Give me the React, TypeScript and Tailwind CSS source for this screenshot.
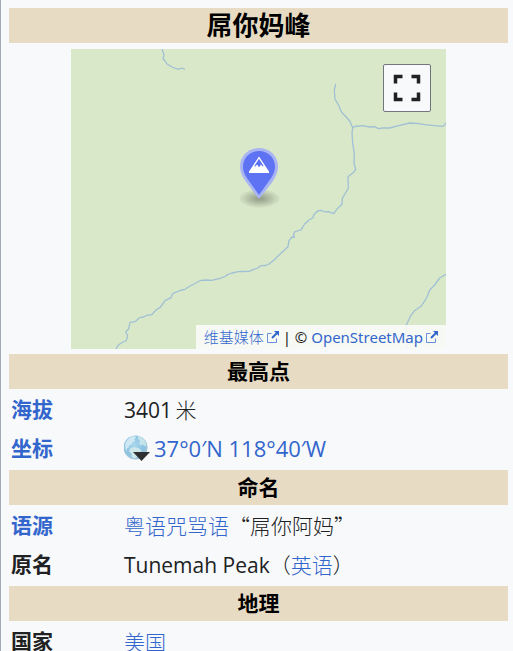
import type { ReactNode } from 'react';

const LINK = 'text-[#3366cc] hover:underline';

/** Small box-and-arrow glyph shown after links that leave the site. */
function ExternalIcon() {
  return (
    <svg viewBox="0 0 12 12" className="inline-block size-3 ml-[3px] align-baseline" aria-hidden="true">
      <path fill="#3366cc" d="M7 0h5v5l-1.800-1.800-4.500 4.500-1.400-1.400 4.500-4.500z" />
      <path fill="none" stroke="#6a8fda" strokeWidth="1" d="M4.500 2.500h-4v9h9v-4" />
    </svg>
  );
}

function MapCanvas() {
  return (
    <svg viewBox="0 0 375 300" className="block w-full h-full" aria-hidden="true">
      <defs>
        <radialGradient id="pin-shadow">
          <stop offset="0" stopColor="#000" stopOpacity="0.34" />
          <stop offset="0.45" stopColor="#000" stopOpacity="0.2" />
          <stop offset="0.85" stopColor="#000" stopOpacity="0.07" />
          <stop offset="1" stopColor="#000" stopOpacity="0.04" />
        </radialGradient>
      </defs>
      <rect width="375" height="300" fill="#d9e8c9" />
      <g fill="none" stroke="#a0c0d4" strokeWidth="1.300" strokeLinejoin="round">
        <path d="M91 0L93 6 92 10 94 12 96 15 101 18 106 20 108 20 111 19 114 20.500" />
        <path d="M264.700 35L263.300 41 264 50 268 57 269 60 271 63.700 274.300 67 278.700 72 281.700 78.700" />
        <path d="M281.700 78.700L284 77.500 291.300 76.700 298.700 78 303 77.700 307.700 79.700 312 79 318.700 79 328.700 76.300 338.700 74 346 74.300 353.700 75.700 363.700 76.700 371 77.300 373.500 76.500 375 73.700" />
        <path d="M281.700 78.700L281 84.300 281.700 94.300 283.300 104.300 283 114.300 284.700 120.300 283 123 277 127.700 277.300 139.300 274.500 144 271.300 149.300 271 155.300 266 160 263 164.300 260.500 164 258 162.700 254.500 163 249.700 161.300 246.500 162 242.700 166 242 168.700 238 171 233.700 175 231.500 178.500 229.700 181 224 182.700 222.500 185 223.300 188.300 221 188 218 191.700 217 197.700 212.500 202 207 207 203 211 198 215 194.500 216.500 189.700 216.700 186 219.500 182 220.700 178.300 222.300 171 222.500 167.300 222.700 161 224 156.300 225.700 154 227.500 149 229.300 140.700 231.300 135 231 129 231.700 124 234.500 119 237 114 240.300 109 241.500 101.700 244.700 100 248.700 94 251.700 92 254.500 89 258.700 85.500 260.500 80.700 265.700 75.700 266.300 73 268 69.500 268.300 67.300 269.700 64.700 272.300 59 273.300 57.700 279.700 54.700 283 56.700 287 55 292 52 293 47.300 296 45 300" />
        <path d="M375 225.300L368.700 229 363.700 236 358.700 241 357 245.500 355.300 249.300 350.300 257 343.700 261.700 339.700 266.700 335.300 276 334.500 283 336 300" />
      </g>
      <ellipse cx="188.500" cy="149.500" rx="20" ry="9" fill="url(#pin-shadow)" />
      <path
        d="M188 99c10.500 0 19 8 19 18.500 0 6-2.500 10.500-6 16L188 150l-12.500-16.500c-4-5.500-6.500-10-6.500-16C169 107 177.500 99 188 99z"
        fill="#a9b5f3"
      />
      <path
        d="M188 102c9 0 16 7 16 15.500 0 5.500-2.500 9.500-6 14.500l-10 14-10-14c-3.500-5-6-9-6-14.500C172 109 179 102 188 102z"
        fill="#5d73f3"
      />
      <path
        fillRule="evenodd"
        d="M188 107.500l10 15v1.500h-20v-1.500zM188 109.800l-4.500 7 .5 1 2-2.300 2 2.800 2-2.800 2 2.300.5-1z"
        fill="#fff"
      />
    </svg>
  );
}

function LocationMap() {
  return (
    <div className="relative mx-auto w-[375px] h-[300px] max-w-full overflow-hidden">
      <MapCanvas />
      <button
        type="button"
        aria-label="全屏"
        className="absolute top-[15px] right-[15px] size-12 flex items-center justify-center rounded-xs border border-[#72777d] bg-[#f8f9fb]"
      >
        <svg viewBox="0 0 28 28" className="size-7" fill="none" stroke="#202122" strokeWidth="3.500" aria-hidden="true">
          <path d="M2.500 9.500V2.500h7M18.500 2.500h7v7M25.500 18.500v7h-7M9.500 25.500h-7v-7" />
        </svg>
      </button>
      <div className="absolute right-0 bottom-0 h-6 px-2 font-['Noto_Sans','Noto_Sans_CJK_SC',sans-serif] text-[15px] leading-6 whitespace-nowrap bg-white/80">
        <a href="#wikimedia" className={LINK}><Zh>维基媒体</Zh><ExternalIcon /></a>
        {' | © '}
        <a href="#osm" className={LINK}>OpenStreetMap<ExternalIcon /></a>
      </div>
    </div>
  );
}

function Globe() {
  return (
    <svg viewBox="0 0 26 26" className="size-[26px] shrink-0" aria-hidden="true">
      <defs>
        <radialGradient id="globe-sea" cx="0.450" cy="0.400" r="0.650">
          <stop offset="0" stopColor="#a9d6ee" />
          <stop offset="0.6" stopColor="#8cc3e2" />
          <stop offset="1" stopColor="#a3c6d6" />
        </radialGradient>
      </defs>
      <circle cx="11.500" cy="12.500" r="12" fill="url(#globe-sea)" />
      <path d="M1.500 8c1.500-3.500 4.500-6 8-7l3 1-2 2 .5 2-2.500 1.500-1 2-2 .5-1 2.500-1.500 1-.5 3c-1.500-2.500-1.500-6-1-8.500z" fill="#cfe9f2" />
      <path d="M14 1l3 1c3 2 5 5 5.500 8.500l-2 .5-2-1.500-2 1-1.500-2.500 1-2.500-2-1.500z" fill="#c5e3ea" />
      <path d="M6 13.500l3.500-1.500 5 1 3 2.500-2 4-4.500 4-3-1-.5-4-2.500-2z" fill="#cde7ea" />
      <path d="M9 17h17l-8.500 9z" fill="#2d2f31" />
    </svg>
  );
}

/** Chinese running text in the thin cut. */
function Zh({ children }: { children: ReactNode }) {
  return <span className="font-['Noto_Sans_CJK_SC',sans-serif] font-light">{children}</span>;
}

function Band({ children, large = false }: { children: ReactNode; large?: boolean }) {
  return (
    <tr>
      <th
        colSpan={2}
        className={`h-[35px] p-0 bg-[#e7dbc4] text-black text-center font-bold leading-[35px] ${large ? 'text-[26px]' : 'text-[21px]'}`}
      >
        {children}
      </th>
    </tr>
  );
}

function Row({ label, href, children }: { label: string; href?: string; children: ReactNode }) {
  return (
    <tr>
      <th scope="row" className="h-9 px-0.5 pt-0 pb-0.5 text-left font-bold">
        {href ? <a href={href} className={LINK}>{label}</a> : label}
      </th>
      <td className="h-9 px-0.5 pt-0 pb-0.5">{children}</td>
    </tr>
  );
}

export default function App() {
  return (
    <div className="min-h-screen border-l border-[#a2a9b1] bg-[#f8f9fb] pt-[5px] pl-[5px] pr-0.5 font-['Open_Sans','Noto_Sans_CJK_SC',sans-serif] text-[21px] leading-8 text-[#202122]">
      <table className="w-full table-fixed border-separate border-spacing-[3px]">
        <colgroup>
          <col className="w-[110px]" />
          <col />
        </colgroup>
        <tbody>
          <Band large>屌你妈峰</Band>
          <tr>
            <td colSpan={2} className="px-0 pt-[3px] pb-0.5">
              <LocationMap />
            </td>
          </tr>
          <Band>最高点</Band>
          <Row label="海拔" href="#elevation">3401&thinsp;<Zh>米</Zh></Row>
          <Row label="坐标" href="#coordinates">
            <div className="flex items-center gap-1">
              <Globe />
              <a href="#geohack" className={`${LINK} text-[22px]`}>37°0′N 118°40′W</a>
            </div>
          </Row>
          <Band>命名</Band>
          <Row label="语源" href="#etymology">
            <Zh><a href="#cantonese-profanity" className={LINK}>粤语咒骂语</a>“屌你阿妈”</Zh>
          </Row>
          <Row label="原名">
            Tunemah Peak<Zh>（<a href="#english" className={LINK}>英语</a>）</Zh>
          </Row>
          <Band>地理</Band>
          <Row label="国家">
            <Zh><a href="#usa" className={LINK}>美国</a></Zh>
          </Row>
        </tbody>
      </table>
    </div>
  );
}
